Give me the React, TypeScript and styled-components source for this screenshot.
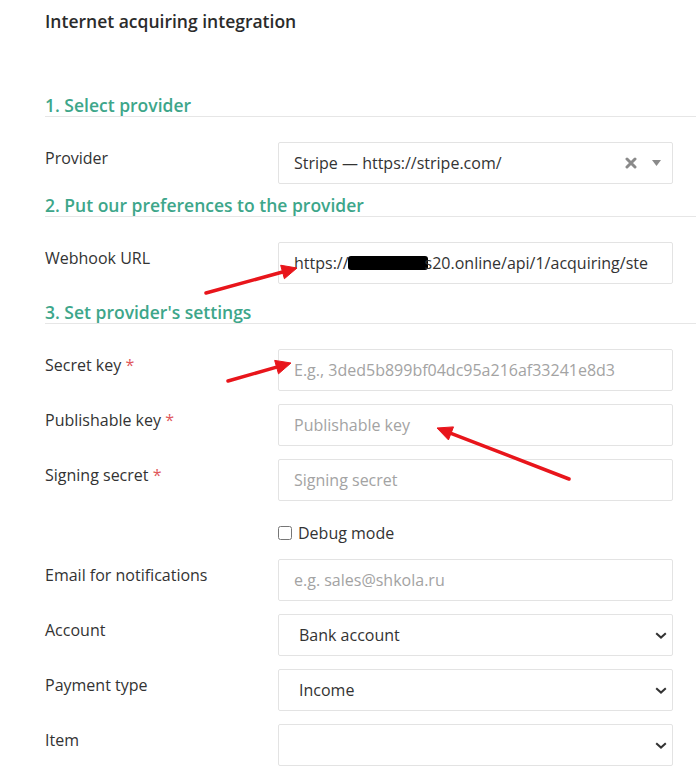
import styled, { createGlobalStyle } from 'styled-components';

const GlobalStyle = createGlobalStyle`
  body {
    margin: 0;
    background: #fff;
    font-family: 'Open Sans', 'Liberation Sans', sans-serif;
    color: #333;
  }
`;

const Page = styled.div`
  position: relative;
  width: 696px;
  height: 774px;
  overflow: hidden;
  padding-left: 45px;
  box-sizing: border-box;
`;

const Title = styled.h1`
  margin: 9px 0 61px;
  font-size: 17.5px;
  line-height: 24px;
  font-weight: 600;
  color: #2b2b2b;
`;

// margin-top collapses with the previous row's 13px bottom margin
const Heading = styled.h2<{ $top: number }>`
  margin: ${p => p.$top}px -40px 25px 0;
  font-size: 17.5px;
  line-height: 22px;
  font-weight: 600;
  color: #3da68a;
  border-bottom: 1px solid #e6e6e6;
`;

const FormRow = styled.div`
  display: grid;
  grid-template-columns: 233px 395px;
  margin-bottom: 13px;
`;

const Label = styled.label`
  padding-top: 5px;
  font-size: 16px;
  line-height: 22px;
  color: #333;
`;

const Required = styled.span`
  color: #e0575b;
`;

const TextInput = styled.input`
  box-sizing: border-box;
  width: 100%;
  height: 42px;
  padding: 0 15px;
  border: 1px solid #e3e3e3;
  border-radius: 2px;
  font-family: inherit;
  font-size: 16px;
  color: #333;
  outline: none;
  &::placeholder {
    color: #a3a3a3;
  }
`;

const ReadonlyField = styled.div`
  box-sizing: border-box;
  display: flex;
  align-items: center;
  height: 42px;
  padding: 0 15px;
  border: 1px solid #e3e3e3;
  border-radius: 2px;
  font-size: 16px;
  color: #333;
  white-space: nowrap;
  overflow: hidden;
`;

const Redacted = styled.span`
  display: inline-block;
  width: 80px;
  height: 14px;
  margin: 0 -3px 0 -1px;
  background: #000;
  border-radius: 3px;
`;

const Combo = styled.div`
  box-sizing: border-box;
  display: flex;
  align-items: center;
  height: 42px;
  padding: 0 11px 0 15px;
  border: 1px solid #e3e3e3;
  border-radius: 2px;
  font-size: 16px;
  color: #333;
`;

const ComboText = styled.span`
  flex: 1;
  white-space: nowrap;
`;

const ClearIcon = styled.svg`
  margin-right: 15px;
`;

const SelectWrap = styled.div`
  position: relative;
`;

const Select = styled.select`
  box-sizing: border-box;
  display: block;
  width: 100%;
  height: 42px;
  padding: 0 28px 0 20px;
  border: 1px solid #e3e3e3;
  border-radius: 2px;
  background: #fff;
  appearance: none;
  font-family: inherit;
  font-size: 16px;
  color: #333;
  outline: none;
`;

const Chevron = styled.svg`
  position: absolute;
  top: 18px;
  right: 6px;
  pointer-events: none;
`;

const CheckRow = styled.div`
  box-sizing: border-box;
  display: flex;
  align-items: center;
  height: 32px;
  padding-top: 6px;
  margin: 0 0 13px 233px;
  font-size: 16px;
  color: #333;
`;

const Checkbox = styled.input`
  width: 14px;
  height: 14px;
  margin: 0 6px 0 0;
`;

const Annotations = styled.svg`
  position: absolute;
  top: 0;
  left: 0;
  pointer-events: none;
`;

const Arrow = ({ x1, y1, x2, y2 }: { x1: number; y1: number; x2: number; y2: number }) => {
  const a = Math.atan2(y2 - y1, x2 - x1);
  const len = 15;
  const half = 7;
  const bx = x2 - Math.cos(a) * len;
  const by = y2 - Math.sin(a) * len;
  const px = -Math.sin(a) * half;
  const py = Math.cos(a) * half;
  return (
    <g fill="#e8151b" stroke="#e8151b">
      <line x1={x1} y1={y1} x2={bx} y2={by} strokeWidth={3.5} strokeLinecap="round" />
      <polygon
        points={`${x2},${y2} ${bx + px},${by + py} ${bx - px},${by - py}`}
        strokeWidth={1}
        strokeLinejoin="round"
      />
    </g>
  );
};

const Row = ({ label, required, children }: { label: string; required?: boolean; children: React.ReactNode }) => (
  <FormRow>
    <Label>
      {label}
      {required && <Required> *</Required>}
    </Label>
    <div>{children}</div>
  </FormRow>
);

const Dropdown = ({ value, text }: { value: string; text: string }) => (
  <SelectWrap>
    <Select defaultValue={value}>
      <option value={value}>{text}</option>
    </Select>
    <Chevron width="12" height="7" viewBox="0 0 12 7">
      <path d="M1.2 1.2 L6 5.6 L10.8 1.2" fill="none" stroke="#333" strokeWidth="2" />
    </Chevron>
  </SelectWrap>
);

export default function App() {
  return (
    <Page>
      <GlobalStyle />
      <Title>Internet acquiring integration</Title>

      <Heading $top={0}>1. Select provider</Heading>
      <Row label="Provider">
        <Combo>
          <ComboText>Stripe — https://stripe.com/</ComboText>
          <ClearIcon width="12" height="12" viewBox="0 0 12 12">
            <path d="M2 2 L10 10 M10 2 L2 10" stroke="#8a8a8a" strokeWidth="3" strokeLinecap="round" />
          </ClearIcon>
          <svg width="9" height="6" viewBox="0 0 9 6">
            <path d="M0 0 H9 L4.5 6 Z" fill="#8a8a8a" />
          </svg>
        </Combo>
      </Row>

      <Heading $top={-3}>2. Put our preferences to the provider</Heading>
      <Row label="Webhook URL">
        <ReadonlyField>
          https://<Redacted />s20.online/api/1/acquiring/ste
        </ReadonlyField>
      </Row>

      <Heading $top={17}>3. Set provider's settings</Heading>
      <Row label="Secret key" required>
        <TextInput placeholder="E.g., 3ded5b899bf04dc95a216af33241e8d3" />
      </Row>
      <Row label="Publishable key" required>
        <TextInput placeholder="Publishable key" />
      </Row>
      <Row label="Signing secret" required>
        <TextInput placeholder="Signing secret" />
      </Row>

      <CheckRow>
        <Checkbox type="checkbox" id="debug" />
        <label htmlFor="debug">Debug mode</label>
      </CheckRow>

      <Row label="Email for notifications">
        <TextInput placeholder="e.g. sales@shkola.ru" />
      </Row>
      <Row label="Account">
        <Dropdown value="bank" text="Bank account" />
      </Row>
      <Row label="Payment type">
        <Dropdown value="income" text="Income" />
      </Row>
      <Row label="Item">
        <Dropdown value="" text="" />
      </Row>

      <Annotations width="696" height="774">
        <Arrow x1={206} y1={293} x2={297} y2={268} />
        <Arrow x1={228} y1={381} x2={291} y2={363} />
        <Arrow x1={569} y1={479} x2={437} y2={428} />
      </Annotations>
    </Page>
  );
}
